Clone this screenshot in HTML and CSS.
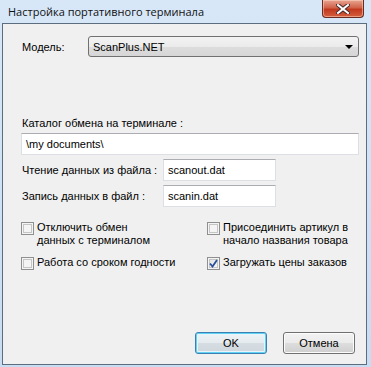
FILE: index.html
```html
<!DOCTYPE html>
<html lang="ru">
<head>
  <meta charset="UTF-8" />
  <title>Настройка портативного терминала</title>
  <link rel="stylesheet" href="styles.css">
</head>
<body>

  <div class="window">

    <div class="titlebar">
      <div class="title">Настройка портативного терминала</div>
      <div class="close-btn">
        <svg width="14" height="10" viewBox="0 0 14 10">
          <path d="M2 1 L12 9 M12 1 L2 9" stroke="#4a2a2a" stroke-width="4" stroke-linecap="square" fill="none" />
          <path d="M2 1 L12 9 M12 1 L2 9" stroke="#ffffff" stroke-width="2" stroke-linecap="square" fill="none" />
        </svg>
      </div>
    </div>

    <div class="client">

      <div class="row model-row">
        <div class="label model-label">Модель:</div>
        <div class="combo">
          <span>ScanPlus.NET</span>
          <span class="arrow"></span>
        </div>
      </div>

      <div class="label catalog-label">Каталог обмена на терминале :</div>
      <div class="edit wide">\my documents\</div>

      <div class="row file-row">
        <div class="label file-label">Чтение данных из файла :</div>
        <div class="edit short">scanout.dat</div>
      </div>

      <div class="row file-row">
        <div class="label file-label">Запись данных в файл :</div>
        <div class="edit short">scanin.dat</div>
      </div>

      <div class="checks">
        <div class="check">
          <span class="box"></span>
          <span class="label">Отключить обмен<br>данных с терминалом</span>
        </div>
        <div class="check">
          <span class="box"></span>
          <span class="label">Присоединить артикул в<br>начало названия товара</span>
        </div>
        <div class="check">
          <span class="box"></span>
          <span class="label">Работа со сроком годности</span>
        </div>
        <div class="check">
          <span class="box checked">
            <svg width="9" height="9" viewBox="0 0 9 9">
              <path d="M1 4.5 L3.5 7.5 L8 1" stroke="#2a4f9a" stroke-width="1.8" fill="none" />
            </svg>
          </span>
          <span class="label">Загружать цены заказов</span>
        </div>
      </div>

      <div class="buttons">
        <div class="button default">OK</div>
        <div class="button">Отмена</div>
      </div>

    </div>
  </div>

</body>
</html>
```

FILE: styles.css
```css
* {
  margin: 0;
  padding: 0;
  box-sizing: border-box;
}

body {
  background: #cfe2f6;
  font-family: 'Liberation Sans', Arial, sans-serif;
  font-size: 11px;
  color: #000;
}

.window {
  width: 371px;
  height: 367px;
  background: linear-gradient(#d7e7f8, #c8dcf2);
  display: flex;
  flex-direction: column;
}

.titlebar {
  height: 23px;
  display: flex;
  align-items: flex-start;
  justify-content: space-between;
}

.title {
  font-family: 'Open Sans', 'Noto Sans', sans-serif;
  font-size: 11px;
  color: #111;
  padding: 4px 0 0 8px;
}

.close-btn {
  width: 42px;
  height: 18px;
  margin-right: 7px;
  border: 1px solid #6b2b20;
  border-top: none;
  border-radius: 0 0 4px 4px;
  background: linear-gradient(#e8a593, #d0624a 45%, #c0391e 55%, #d55e40);
  display: flex;
  align-items: center;
  justify-content: center;
  box-shadow: inset 0 0 0 1px rgba(255, 220, 200, 0.5);
}

.client {
  flex: 1;
  margin: 0 4px 2px 2px;
  border: 1px solid #5d6d80;
  background: #f0f0f0;
  padding: 12px 7px 0 18px;
  display: flex;
  flex-direction: column;
}

.row {
  display: flex;
  align-items: center;
}

.model-row {
  height: 21px;
}

.model-label {
  width: 67px;
  padding-left: 1px;
}

.combo {
  flex: 1;
  height: 21px;
  border: 1px solid #707070;
  border-radius: 3px;
  background: linear-gradient(#f3f3f3, #ebebeb 50%, #dddddd 51%, #d6d6d6);
  display: flex;
  align-items: center;
  justify-content: space-between;
  padding: 0 5px 0 4px;
}

.arrow {
  width: 0;
  height: 0;
  border-left: 4px solid transparent;
  border-right: 4px solid transparent;
  border-top: 4px solid #000;
}

.catalog-label {
  margin-top: 60px;
  padding-left: 1px;
  line-height: 13px;
}

.edit {
  background: #fff;
  border: 1px solid #dcdfe3;
  border-top-color: #abadb3;
  height: 22px;
  padding: 2px 4px;
  line-height: 16px;
}

.wide {
  margin-top: 3px;
}

.file-row {
  margin-top: 4px;
}

.file-label {
  width: 142px;
  padding-left: 1px;
}

.short {
  width: 113px;
}

.checks {
  margin-top: 14px;
  display: grid;
  grid-template-columns: 186px 1fr;
  row-gap: 9px;
}

.check {
  display: flex;
  align-items: flex-start;
  gap: 3px;
}

.check .label {
  line-height: 13px;
}

.box {
  width: 13px;
  height: 13px;
  margin-top: 1px;
  border: 1px solid #8e8f8f;
  background: #f4f4f4;
  box-shadow: inset 0 0 0 1px #f4f4f4, inset 0 0 0 2px #c5c5c5;
  flex-shrink: 0;
  display: flex;
  align-items: center;
  justify-content: center;
}

.box.checked {
  background: linear-gradient(135deg, #dcdcdc, #ffffff);
}

.buttons {
  margin-top: auto;
  margin-bottom: 10px;
  display: flex;
  justify-content: flex-end;
  gap: 16px;
  padding-right: 4px;
}

.button {
  width: 72px;
  height: 22px;
  border: 1px solid #707070;
  border-radius: 3px;
  background: linear-gradient(#f2f2f2, #ebebeb 50%, #dddddd 51%, #cfcfcf);
  box-shadow: inset 0 0 0 1px #fcfcfc;
  display: flex;
  align-items: center;
  justify-content: center;
}

.button.default {
  border-color: #3c7fb1;
  box-shadow: inset 0 0 0 1px #5fd2f5, inset 0 0 0 2px #e8f4fa;
  background: linear-gradient(#eef3f6, #e4eaee 50%, #d6dde2 51%, #cfd7dc);
}
```
